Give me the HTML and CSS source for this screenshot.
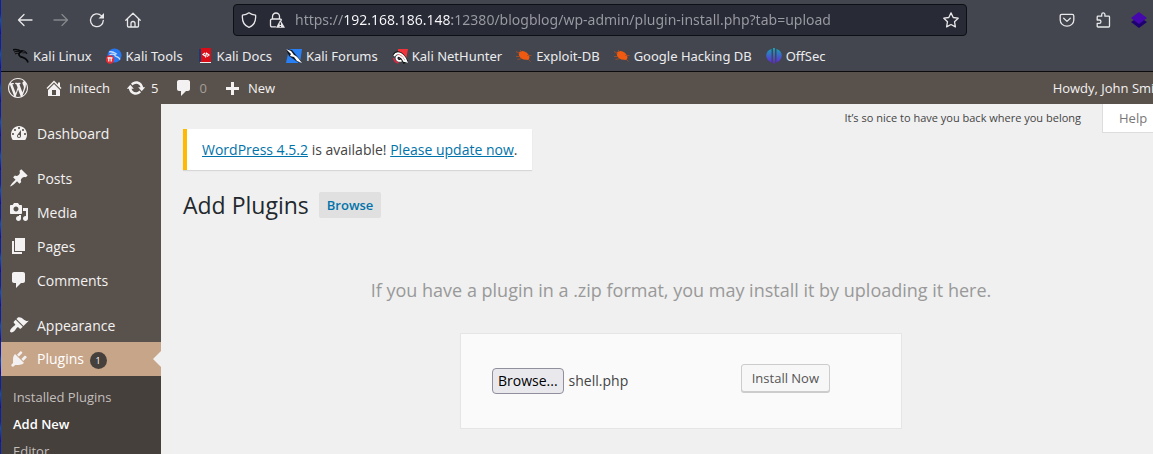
FILE: index.html
```html
<!DOCTYPE html>
<html lang="en">
<head>
<meta charset="utf-8">
<title>Add Plugins</title>
<link rel="stylesheet" href="styles.css">
</head>
<body>
<header class="chrome">
  <div class="navbar">
    <div class="nav-buttons">
      <button class="tool" aria-label="Back"><svg viewBox="0 0 16 16"><path class="line" d="M15 8H1.500M7 2.500L1.500 8 7 13.500"/></svg></button>
      <button class="tool" aria-label="Forward" disabled><svg viewBox="0 0 16 16"><path class="line" d="M1 8h13.500M9 2.500L14.500 8 9 13.500"/></svg></button>
      <button class="tool" aria-label="Reload"><svg viewBox="0 0 16 16"><path class="line" d="M14.300 8.500A6.400 6.400 0 1 1 12.300 3.600L14 5.200"/><path class="fill" d="M15 1v5.500H9.500z"/></svg></button>
      <button class="tool" aria-label="Home"><svg viewBox="0 0 16 16"><path class="line" d="M.8 8.300L8 1.200l7.200 7.100M2.500 6.800V14q0 1 1 1h9q1 0 1-1V6.800M6 15v-3.500a2 2 0 0 1 4 0V15"/></svg></button>
    </div>
    <div class="urlbar">
      <svg viewBox="0 0 16 16"><path class="line" d="M8 .8C6 2.300 3.500 3 1.400 3.200 1 8.500 2.800 13.500 8 15.300c5.200-1.800 7-6.800 6.600-12.100C12.500 3 10 2.300 8 .8z"/></svg>
      <svg class="lock" viewBox="0 0 16 16"><path class="line" d="M3.500 7V4.500a3.500 3.500 0 0 1 7 0V7M6.500 14.800H3q-1.500 0-1.500-1.500V8.500Q1.500 7 3 7h8q1.300 0 1.500 1.200"/><path class="fill" d="M11.300 7.800L7 15.800h9z"/><path d="M11.300 10.500v2.600M11.300 13.900v1" stroke="#282a36" stroke-width="1.200"/></svg>
      <input class="url" type="text" aria-label="Address" value="https://192.168.186.148:12380/blogblog/wp-admin/plugin-install.php?tab=upload">
      <button class="tool" aria-label="Bookmark this page"><svg viewBox="0 0 16 16"><path class="line" d="M8 .9l2.200 4.600 5 .7-3.700 3.500.9 5.200L8 12.500l-4.400 2.400.9-5.200L.8 6.200l5-.7z"/></svg></button>
    </div>
    <div class="nav-extras">
      <button class="tool" aria-label="Save to Pocket"><svg viewBox="0 0 16 16"><path class="line" d="M2.800 2.300h10.400q1.600 0 1.600 1.600V8A6.800 6.200 0 0 1 1.200 8V3.900q0-1.600 1.600-1.600zM4.700 6.300L8 9.400l3.300-3.100"/></svg></button>
      <button class="tool" aria-label="Extensions"><svg viewBox="0 0 16 16"><path class="line" d="M2.200 8V5q0-.8.8-.8h3.700V2.500a1.600 1.600 0 0 1 3.200 0v1.700h3.800q.8 0 .8.800v9.200q0 .8-.8.800H3q-.8 0-.8-.8v-2.900h2.100a1.600 1.600 0 0 0 0-3.300z"/></svg></button>
      <button class="tool" aria-label="Wappalyzer"><svg viewBox="0 0 16 16"><path fill="#1e0070" d="M0 10l8-5 8 5-8 6z"/><path fill="#4608ad" d="M0 6l8-6 8 6-8 6z"/></svg></button>
    </div>
  </div>
  <nav class="bookmarks" aria-label="Bookmarks">
    <a href="#"><svg viewBox="0 0 16 16" fill="none" stroke="#08090b"><path stroke-width="1.700" d="M0 2C4 .5 6 2 8.500 3.600c-2.500.8-3.500 3-1.500 4.600 2.500 1.800 6.500.8 8 6.300"/><path d="M1 4c3-1 5-.5 6.500.5M2 6C3.500 5 5 5 6.500 6M8 2.500c3 0 5 1 6 3-1.500-1-3-1-4.500-.5"/></svg>Kali Linux</a>
    <a href="#"><svg viewBox="0 0 16 16"><circle cx="8.500" cy="7.500" r="7" fill="#2877f2"/><path d="M3 4c3.500-1 5 .3 7 1.800-2 .5-1.500 2.200.5 2.900 2 .6 3 1 3.300 3M3.500 7C6 5.500 7.500 6 9 7" fill="none" stroke="#c5dcff" stroke-width="1.300"/><circle cx="4" cy="11.500" r="4.200" fill="#e62c35"/><path d="M1.500 9.900h5M2.800 10v3.500M5.200 10v3.500" stroke="#fff" stroke-width="1.200"/></svg>Kali Tools</a>
    <a href="#"><svg viewBox="0 0 16 16"><path fill="#173d70" d="M2 1h3v13H2z"/><path fill="#d90c18" d="M4 0h10v15H3l1-1.500z"/><path fill="#eee" d="M3 14h11v1H3z"/><path d="M8 5L6 6.500 8 8M10 5.500L12 7l-2 1.500M9.500 4.500l-1 5" fill="none" stroke="#fff" stroke-width="1.200"/></svg>Kali Docs</a>
    <a href="#"><svg viewBox="0 0 16 16"><path fill="#2980f5" d="M3 1h13l-2 14H0z"/><path fill="#111927" d="M0 1l6 1 9 11-2 2L3 8z"/><path fill="#fff" d="M0 1l5 2 3 4c3 1 4 3 8 8l-5-2-3-4-4-1 1-2z"/></svg>Kali Forums</a>
    <a href="#"><svg viewBox="0 0 16 16"><path fill="#f1333c" d="M6 1h10l-2 11L6 7z"/><path d="M1.500 8C3 2 10 3 15 13l-3 1.500C10 9 6 7 5.500 10c0 2 2 2.500 4 1.500" fill="none" stroke="#111" stroke-width="2"/><path d="M2 8c3-5 9-3 12.500 5.500L12 13C10 8 5 6 4.500 10c0 2.500 2.500 3.500 5 2.500" fill="none" stroke="#fff" stroke-width="1.900"/><path d="M1.500 10q1 4 5 5" stroke="#d92a42" stroke-width="1.600" fill="none"/></svg>Kali NetHunter</a>
    <a href="#"><svg viewBox="0 0 16 16"><path fill="#ef5a10" d="M3 4.500c2-2 5-2 7.500 0C12 5.700 13 7 13.500 9.500l-1 2.500-5-.5C4.500 10.500 2 7.500 3 4.500z"/><path d="M0 3.500l4 2M0 8.500h4M1.500 11.500L6 10.500M4 2l2 2M11 7.500l4.500 0M12 11l2.500 2.500" stroke="#b04f22" stroke-width=".8"/></svg>Exploit-DB</a>
    <a href="#"><svg viewBox="0 0 16 16"><path fill="#ef5a10" d="M3 4.500c2-2 5-2 7.500 0C12 5.700 13 7 13.500 9.500l-1 2.500-5-.5C4.500 10.500 2 7.500 3 4.500z"/><path d="M0 3.500l4 2M0 8.500h4M1.500 11.500L6 10.500M4 2l2 2M11 7.500l4.500 0M12 11l2.500 2.500" stroke="#b04f22" stroke-width=".8"/></svg>Google Hacking DB</a>
    <a href="#"><svg viewBox="0 0 16 16"><defs><linearGradient id="off" x2="0" y2="1"><stop stop-color="#12a6b8"/><stop offset="1" stop-color="#6422dc"/></linearGradient></defs><path fill="url(#off)" d="M5.500 1v13.500C-1.500 12-1.500 3 5.500 1zM7 0h2v15.500H7zM10.500 1v13.500C17.500 12 17.500 3 10.500 1z"/></svg>OffSec</a>
  </nav>
</header>

<div class="viewport">
<div class="page">
  <nav class="adminbar" aria-label="Toolbar">
    <a href="#" class="wp" aria-label="About WordPress"><svg viewBox="0 0 20 20"><path d="M20 10c0-5.510-4.490-10-10-10C4.480 0 0 4.490 0 10c0 5.520 4.480 10 10 10 5.510 0 10-4.480 10-10zM7.780 15.370L4.370 6.220c.55-.02 1.170-.08 1.170-.08.5-.06.44-1.130-.06-1.110 0 0-1.450.11-2.370.11-.18 0-.37 0-.58-.01C4.120 2.690 6.870 1.110 10 1.110c2.330 0 4.450.87 6.050 2.340-.68-.11-1.650.39-1.650 1.580 0 .74.45 1.360.9 2.100.35.61.55 1.360.55 2.460 0 1.490-1.400 5-1.400 5l-3.030-8.370c.54-.02.82-.17.82-.17.5-.05.44-1.250-.06-1.220 0 0-1.440.12-2.380.12-.87 0-2.330-.12-2.330-.12-.5-.03-.56 1.200-.06 1.220l.92.08 1.260 3.410zM17.410 10c.24-.64.74-1.870.43-4.250.7 1.290 1.050 2.710 1.050 4.250 0 3.290-1.730 6.240-4.400 7.780.97-2.590 1.940-5.200 2.920-7.780zM6.100 18.090C3.120 16.650 1.110 13.530 1.110 10c0-1.300.23-2.480.72-3.590C3.250 10.300 4.670 14.200 6.100 18.090zm4.030-6.630l2.580 6.980c-.86.29-1.760.45-2.710.45-.79 0-1.570-.11-2.290-.33.81-2.380 1.620-4.740 2.420-7.100z"/></svg></a>
    <a href="#"><svg viewBox="0 0 20 20"><path d="M16 8.500l1.530 1.530-1.060 1.060L10 4.600l-6.470 6.490-1.060-1.060L10 2.500l4 4v-2h2v4zm-6-2.460l6 5.990V18H4v-5.970zM12 17v-5H8v5h4z"/></svg>Initech</a>
    <a href="#"><svg viewBox="0 0 20 20"><path d="M10.200 3.280c3.530 0 6.430 2.610 6.920 6h2.080l-3.500 4-3.500-4h2.320c-.45-1.970-2.210-3.450-4.320-3.450-1.450 0-2.730.71-3.540 1.780L4.950 5.660C6.230 4.200 8.110 3.280 10.200 3.280zm-.4 13.440c-3.520 0-6.430-2.610-6.920-6H.8l3.500-4c1.170 1.330 2.330 2.670 3.500 4H5.480c.45 1.970 2.210 3.450 4.320 3.450 1.450 0 2.730-.71 3.540-1.780l1.710 1.950c-1.280 1.460-3.150 2.380-5.250 2.380z"/></svg>5</a>
    <a href="#" class="none"><svg viewBox="0 0 20 20"><path d="M5 2h9c1.100 0 2 .9 2 2v7c0 1.100-.9 2-2 2h-2l-5 5v-5H5c-1.100 0-2-.9-2-2V4c0-1.100.9-2 2-2z"/></svg>0</a>
    <a href="#"><svg viewBox="0 0 20 20"><path d="M8 4h3v5h5v3h-5v5H8v-5H3V9h5z"/></svg>New</a>
    <a href="#" class="howdy">Howdy, John Smith</a>
  </nav>

  <div class="body">
    <nav class="menu" aria-label="Main menu">
      <a href="#"><svg viewBox="0 0 20 20"><path d="M3.760 17h12.480c1.100-1.480 1.760-3.310 1.760-5.290 0-4.800-3.580-8.700-8-8.700s-8 3.900-8 8.700c0 1.980.66 3.810 1.760 5.290zM10 4c.55 0 1 .45 1 1s-.45 1-1 1-1-.45-1-1 .45-1 1-1zM6 6c.55 0 1 .45 1 1s-.45 1-1 1-1-.45-1-1 .45-1 1-1zm8 0c.55 0 1 .45 1 1s-.45 1-1 1-1-.45-1-1 .45-1 1-1zm-5.370 5.550L12 7v6c0 1.100-.9 2-2 2s-2-.9-2-2c0-.57.24-1.080.63-1.450zM4 10c.55 0 1 .45 1 1s-.45 1-1 1-1-.45-1-1 .45-1 1-1zm12 0c.55 0 1 .45 1 1s-.45 1-1 1-1-.45-1-1 .45-1 1-1zm-5 3c0-.55-.45-1-1-1s-1 .45-1 1 .45 1 1 1 1-.45 1-1z"/></svg>Dashboard</a>
      <a href="#" class="group"><svg viewBox="0 0 20 20"><path d="M10.440 3.020l1.820-1.820 6.360 6.350-1.830 1.820c-1.050-.68-2.480-.57-3.410.36l-.75.75c-.92.93-1.040 2.350-.35 3.410l-1.830 1.820-2.410-2.410-2.800 2.790c-.42.42-3.380 2.710-3.800 2.290s1.860-3.390 2.280-3.810l2.790-2.790L4.100 9.360l1.830-1.820c1.050.69 2.480.57 3.400-.36l.75-.75c.93-.92 1.050-2.350.36-3.410z"/></svg>Posts</a>
      <a href="#"><svg viewBox="0 0 20 20"><path fill-rule="evenodd" d="M13 11V4c0-.55-.45-1-1-1h-1.670L9 1H5L3.670 3H2c-.55 0-1 .45-1 1v7c0 .55.45 1 1 1h10c.55 0 1-.45 1-1zM7 4.500c1.380 0 2.500 1.120 2.500 2.500S8.380 9.500 7 9.500 4.500 8.380 4.500 7 5.620 4.500 7 4.500zM14 6h5v10.500c0 1.380-1.120 2.500-2.500 2.500S14 17.880 14 16.500s1.120-2.500 2.500-2.500c.17 0 .34.02.5.05V9h-3V6zm-4 8.050V13h2v3.500c0 1.380-1.120 2.500-2.500 2.500S7 17.880 7 16.500 8.120 14 9.500 14c.17 0 .34.02.5.05z"/></svg>Media</a>
      <a href="#"><svg viewBox="0 0 20 20"><path d="M6 15V2h10v13H6zm-1 1h8v2H3V5h2v11z"/></svg>Pages</a>
      <a href="#"><svg viewBox="0 0 20 20"><path d="M5 2h9c1.100 0 2 .9 2 2v7c0 1.100-.9 2-2 2h-2l-5 5v-5H5c-1.100 0-2-.9-2-2V4c0-1.100.9-2 2-2z"/></svg>Comments</a>
      <a href="#" class="group"><svg viewBox="0 0 20 20"><path d="M14.480 11.060L7.410 3.990l1.500-1.500c.5-.56 2.300-.47 3.510.32 1.210.8 1.430 1.280 2.910 2.100 1.180.64 2.450 1.260 4.450.85zm-.71.71L6.700 4.700 4.930 6.470c-.39.39-.39 1.020 0 1.410l1.060 1.060c.39.39.39 1.030 0 1.420-.6.6-1.430 1.110-2.210 1.690-.35.26-.7.53-1.010.84C1.430 14.230.4 16.080 1.400 17.070c.99 1 2.840-.03 4.180-1.360.31-.31.58-.66.85-1.020.57-.78 1.080-1.610 1.690-2.210.39-.39 1.020-.39 1.410 0l1.060 1.060c.39.39 1.020.39 1.410 0z"/></svg>Appearance</a>
      <a href="#" class="current"><svg viewBox="0 0 20 20"><path d="M13.110 4.360L9.870 7.600 8 5.730l3.240-3.240c.35-.34 1.050-.2 1.560.32.52.51.66 1.210.31 1.550zm-8 1.770l.91-1.120 9.010 9.010-1.190.84c-.71.71-2.630 1.160-3.820 1.160H6.140L4.900 17.260c-.59.59-1.540.59-2.120 0-.59-.58-.59-1.530 0-2.120l1.240-1.240v-3.880c0-1.130.4-3.190 1.090-3.890zm7.260 3.970l3.240-3.240c.34-.35 1.040-.21 1.550.31.52.51.66 1.210.31 1.550l-3.240 3.250z"/></svg><span>Plugins <span class="count">1</span></span></a>
      <div class="submenu">
        <a href="#">Installed Plugins</a>
        <a href="#" class="active">Add New</a>
        <a href="#">Editor</a>
      </div>
    </nav>

    <main class="content">
      <div class="top">
        <p class="notice"><a href="#">WordPress 4.5.2</a> is available! <a href="#">Please update now</a>.</p>
        <p class="lyric">It’s so nice to have you back where you belong</p>
        <button class="help">Help</button>
      </div>
      <div class="title">
        <h1>Add Plugins</h1>
        <a href="#" class="browse">Browse</a>
      </div>
      <p class="hint">If you have a plugin in a .zip format, you may install it by uploading it here.</p>
      <form class="upload">
        <label class="file"><input type="file"><span class="pick">Browse...</span><span>shell.php</span></label>
        <button type="button" class="install">Install Now</button>
      </form>
    </main>
  </div>
</div>
</div>
</body>
</html>
```
FILE: styles.css
```css
* { box-sizing: border-box; }
html { height: 100%; }
body {
  margin: 0;
  height: 100%;
  display: flex;
  flex-direction: column;
  overflow: hidden;
  padding-left: 1px;
  background: repeating-linear-gradient(#0a1fae 0 14px, #0d4fd0 20px, #0909b4 34px);
  font-family: "Open Sans", sans-serif;
}
a { text-decoration: none; }
p, h1 { margin: 0; }
button { font-family: inherit; cursor: pointer; }
svg { display: block; flex: none; }

/* Browser chrome */
.chrome {
  flex: none;
  background: #43464e;
  border-bottom: 1px solid #0c0c0d;
  color: #ececee;
  font-family: "Noto Sans", sans-serif;
  overflow: hidden;
}
.chrome svg { width: 16px; height: 16px; }
.line { fill: none; stroke: #e8e8ea; stroke-width: 1.300; stroke-linecap: round; stroke-linejoin: round; }
.fill { fill: #e8e8ea; }
.tool { flex: none; padding: 0; border: 0; background: none; }
.tool:disabled { opacity: .4; }
.navbar { display: flex; align-items: center; height: 40px; }
.nav-buttons { display: flex; gap: 20px; padding-left: 16px; width: 232px; flex: none; }
.urlbar {
  flex: 1;
  display: flex;
  align-items: center;
  height: 32px;
  padding: 0 7px;
  border: 1px solid #0e0f14;
  border-radius: 4px;
  background: #282a36;
}
.urlbar .lock { margin: 0 8px 0 12px; }
.url {
  flex: 1;
  min-width: 0;
  padding: 0 2px;
  border: 0;
  outline: 0;
  font: 14px/22px "Noto Sans", sans-serif;
  color: transparent;
  background: linear-gradient(90deg, #9b9ca3 50px, #fbfbfe 50px 159px, #9b9ca3 159px);
  -webkit-background-clip: text;
  background-clip: text;
}
.nav-extras { display: flex; gap: 20px; width: 186px; padding-left: 92px; flex: none; }
.bookmarks { display: flex; gap: 14px; height: 31px; padding: 0 0 0 12px; align-items: center; }
.bookmarks a {
  display: flex;
  align-items: center;
  gap: 4px;
  color: #ececee;
  font-size: 13px;
  line-height: 18px;
  white-space: nowrap;
}

/* Site page, wider than the window that shows it */
.viewport { flex: 1; min-height: 0; overflow: hidden; }
.page {
  width: calc(100% + 46px);
  min-height: 100%;
  display: flex;
  flex-direction: column;
  background: #f0f0f0;
}
.adminbar { display: flex; height: 32px; background: #59524c; }
.adminbar a {
  display: flex;
  align-items: center;
  gap: 5px;
  padding: 0 8px;
  color: #f3f1f1;
  font-size: 13px;
}
.adminbar .wp { padding-left: 7px; }
.adminbar .none { color: #a39e99; }
.adminbar .howdy { margin-left: auto; padding-right: 32px; white-space: nowrap; }
.adminbar svg, .menu svg { width: 20px; height: 20px; fill: #f3f1f1; }

.body { flex: 1; display: flex; }
.menu {
  flex: none;
  display: flex;
  flex-direction: column;
  width: 160px;
  padding-top: 12px;
  background: #59524c;
  color: #fff;
}
.menu > a {
  flex: none;
  position: relative;
  display: flex;
  align-items: center;
  height: 34px;
  gap: 8px;
  padding-left: 8px;
  color: #f3f1f1;
  font-size: 14px;
}
.menu > .group { margin-top: 11px; }
.menu > .current { background: #c7a589; color: #fff; }
.current::after {
  content: "";
  position: absolute;
  right: 0;
  top: 9px;
  border: 8px solid transparent;
  border-left: 0;
  border-right-color: #f0f0f0;
}
.count {
  display: inline-block;
  width: 17px;
  height: 17px;
  margin-left: 2px;
  border-radius: 50%;
  background: #46403c;
  font-size: 9px;
  line-height: 17px;
  text-align: center;
  vertical-align: middle;
}
.submenu { flex: 1; padding: 8px 12px; background: #46403c; }
.submenu a { display: block; color: #c2bfbd; font-size: 13px; line-height: 27px; }
.submenu .active { color: #fff; font-weight: 600; }

.content { flex: 1; padding: 0 20px 0 22px; color: #444; }
.top { display: flex; align-items: flex-start; }
.notice {
  margin: 25px auto 0 0;
  padding: 10px 15px;
  border-left: 4px solid #ffb900;
  background: #fff;
  box-shadow: 0 1px 1px rgba(0, 0, 0, .1);
  font-size: 14px;
  line-height: 21px;
}
.notice a { color: #0073aa; text-decoration: underline; }
.lyric { padding: 5px 21px 0 0; font-size: 11px; line-height: 18px; }
.help {
  width: 77px;
  height: 29px;
  padding: 0 16px;
  border: 1px solid #ddd;
  border-top: 0;
  background: #fff;
  color: #777;
  font-size: 13px;
  text-align: left;
}
.title { display: flex; align-items: center; gap: 10px; padding-top: 19px; }
h1 { color: #23282d; font-size: 23px; font-weight: 400; line-height: 32px; }
.browse {
  padding: 4px 8px;
  border-radius: 2px;
  background: #e0e0e0;
  color: #0073aa;
  font-size: 13px;
  font-weight: 600;
  line-height: 18px;
}
.hint { padding-top: 56px; color: #999; font-size: 18px; line-height: 26px; text-align: center; }
.upload {
  display: flex;
  justify-content: space-between;
  max-width: 442px;
  min-height: 96px;
  margin: 30px auto;
  padding: 30px;
  border: 1px solid #e5e5e5;
  background: #fafafa;
}
.file { position: relative; display: flex; align-items: center; gap: 5px; width: 250px; padding-left: 1px; font-size: 14px; line-height: 20px; }
.file input { position: absolute; inset: 0; width: 100%; opacity: 0; }
.pick {
  padding: 2px 5px;
  border: 1px solid #8f8f9d;
  border-radius: 4px;
  background: #e9e9ed;
  color: #000;
}
.install {
  height: 28px;
  margin-right: 41px;
  padding: 0 10px;
  border: 1px solid #ccc;
  border-radius: 3px;
  background: #f7f7f7;
  box-shadow: 0 1px 0 #ccc;
  color: #555;
  font-size: 13px;
  white-space: nowrap;
}
```
